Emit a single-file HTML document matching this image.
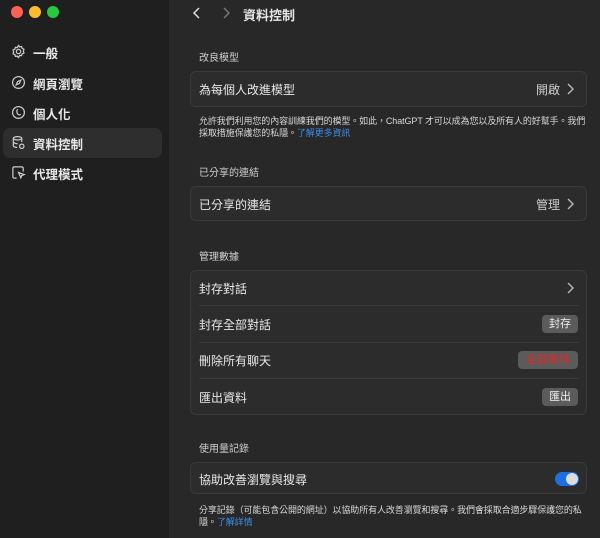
<!DOCTYPE html>
<html><head><meta charset="utf-8"><style>
*{margin:0;padding:0;box-sizing:border-box}
body{width:600px;height:538px;overflow:hidden;background:#282828;font-family:"Liberation Sans","Noto Sans CJK TC",sans-serif;color:#e6e6e6;position:relative}
.side{position:absolute;left:0;top:0;width:170px;height:538px;background:#1f1f1f;border-right:1px solid #2a2a2a}
.dot{position:absolute;top:6px;width:12px;height:12px;border-radius:50%}
.item{position:absolute;left:3px;width:159px;height:30px;border-radius:7px;font-size:12.5px;font-weight:bold;color:#e8e8e8}
.item span{position:absolute;left:30px;top:6px}
.item svg{position:absolute;left:8px;top:7px}
.sel{background:#2e2e2e}
.abs{position:absolute}
.hdr{position:absolute;left:199px;font-size:10px;color:#cfcfcf}
.card{position:absolute;left:190px;width:397px;background:#2c2c2c;border:1px solid #3a3a3a;border-radius:6px}
.lbl{position:absolute;left:199px;font-size:12px;color:#e8e8e8}
.desc{position:absolute;left:199px;font-size:9px;color:#d8d8d8;line-height:12px;width:392px;letter-spacing:-0.1px}
.link{color:#3b8be6}
.btn{position:absolute;height:18px;background:#5b5b5b;border-radius:4px;font-size:11px;text-align:center;line-height:18px;color:#eee}
.div{position:absolute;left:199px;width:380px;height:1px;background:#3a3a3a}
</style></head><body>
<div class="side">
<div class="dot" style="left:11px;background:#fe5f57"></div>
<div class="dot" style="left:29px;background:#febc2e"></div>
<div class="dot" style="left:47px;background:#28c840"></div>
<div class="item" style="top:37px"><svg width="15" height="15" viewBox="0 0 16 16" fill="none" stroke="#ccc" stroke-width="1.3"><circle cx="8" cy="8" r="2.3"/><path d="M8 1.5l1.3 1.6 2-.4.6 2 1.9.9-.6 2 .6 2-1.9.9-.6 2-2-.4L8 14.5l-1.3-1.6-2 .4-.6-2-1.9-.9.6-2-.6-2 1.9-.9.6-2 2 .4z"/></svg><span>一般</span></div>
<div class="item" style="top:68px"><svg width="15" height="15" viewBox="0 0 16 16" fill="none" stroke="#ccc" stroke-width="1.3"><circle cx="8" cy="8" r="6.3"/><path d="M10.5 5.5L9 9 5.5 10.5 7 7z"/></svg><span>網頁瀏覽</span></div>
<div class="item" style="top:98px"><svg width="15" height="15" viewBox="0 0 16 16" fill="none" stroke="#ccc" stroke-width="1.3"><circle cx="8" cy="8" r="6.3"/><path d="M7 4.5c-1 1.5-1.3 4 .5 5.5 1 .7 2 .6 3 0"/></svg><span>個人化</span></div>
<div class="item sel" style="top:128px"><svg width="15" height="15" viewBox="0 0 16 16" fill="none" stroke="#ccc" stroke-width="1.3"><ellipse cx="7" cy="3.5" rx="4.5" ry="1.8"/><path d="M2.5 3.5v8c0 1 2 1.8 4 1.8M11.5 3.5v4M2.5 7.5c0 1 2 1.8 4.5 1.8"/><circle cx="11.5" cy="12" r="2.3"/></svg><span>資料控制</span></div>
<div class="item" style="top:158px"><svg width="15" height="15" viewBox="0 0 16 16" fill="none" stroke="#ccc" stroke-width="1.3"><path d="M6 14H3.5a1.5 1.5 0 01-1.5-1.5v-9A1.5 1.5 0 013.5 2h8A1.5 1.5 0 0113 3.5V7"/><path d="M8 8l6 2.2-2.5 1-1 2.5z"/><path d="M5 5.5h.1M7.5 5.5h.1M5 8.5h.1"/></svg><span>代理模式</span></div>
</div>
<svg class="abs" style="left:191px;top:6px" width="12" height="14" viewBox="0 0 12 14" fill="none" stroke="#ddd" stroke-width="1.5"><path d="M8 2L3 7l5 5"/></svg>
<svg class="abs" style="left:220px;top:6px" width="12" height="14" viewBox="0 0 12 14" fill="none" stroke="#777" stroke-width="1.5"><path d="M4 2l5 5-5 5"/></svg>
<div class="abs" style="left:243px;top:5px;font-size:13px;font-weight:bold">資料控制</div>

<div class="hdr" style="top:49px">改良模型</div>
<div class="card" style="top:71px;height:36px"></div>
<div class="lbl" style="top:81px">為每個人改進模型</div>
<div class="abs" style="left:536px;top:81px;font-size:12px;color:#ccc">開啟</div>
<svg class="abs" style="left:565px;top:82px" width="10" height="14" viewBox="0 0 10 14" fill="none" stroke="#bbb" stroke-width="1.4"><path d="M3 2l5 5-5 5"/></svg>
<div class="desc" style="top:115px">允許我們利用您的內容訓練我們的模型。如此，ChatGPT 才可以成為您以及所有人的好幫手。我們<br>採取措施保護您的私隱。<span class="link">了解更多資訊</span></div>

<div class="hdr" style="top:164px">已分享的連結</div>
<div class="card" style="top:186px;height:35px"></div>
<div class="lbl" style="top:196px">已分享的連結</div>
<div class="abs" style="left:536px;top:196px;font-size:12px;color:#ccc">管理</div>
<svg class="abs" style="left:565px;top:197px" width="10" height="14" viewBox="0 0 10 14" fill="none" stroke="#bbb" stroke-width="1.4"><path d="M3 2l5 5-5 5"/></svg>

<div class="hdr" style="top:248px">管理數據</div>
<div class="card" style="top:270px;height:145px"></div>
<div class="lbl" style="top:280px">封存對話</div>
<svg class="abs" style="left:565px;top:281px" width="10" height="14" viewBox="0 0 10 14" fill="none" stroke="#bbb" stroke-width="1.4"><path d="M3 2l5 5-5 5"/></svg>
<div class="div" style="top:305px"></div>
<div class="lbl" style="top:316px">封存全部對話</div>
<div class="btn" style="left:542px;top:315px;width:36px">封存</div>
<div class="div" style="top:342px"></div>
<div class="lbl" style="top:352px">刪除所有聊天</div>
<div class="btn" style="left:518px;top:351px;width:60px;color:#e02a2a">全部刪除</div>
<div class="div" style="top:378px"></div>
<div class="lbl" style="top:389px">匯出資料</div>
<div class="btn" style="left:542px;top:388px;width:36px">匯出</div>

<div class="hdr" style="top:440px">使用量記錄</div>
<div class="card" style="top:462px;height:32px"></div>
<div class="lbl" style="top:471px">協助改善瀏覽與搜尋</div>
<div class="abs" style="left:555px;top:472px;width:24px;height:14px;border-radius:7px;background:#1f6fe0"><div class="abs" style="left:11px;top:1px;width:12px;height:12px;border-radius:50%;background:#ddd"></div></div>
<div class="desc" style="top:504px">分享記錄（可能包含公開的網址）以協助所有人改善瀏覽和搜尋。我們會採取合適步驟保護您的私<br>隱。<span class="link">了解詳情</span></div>
</body></html>
